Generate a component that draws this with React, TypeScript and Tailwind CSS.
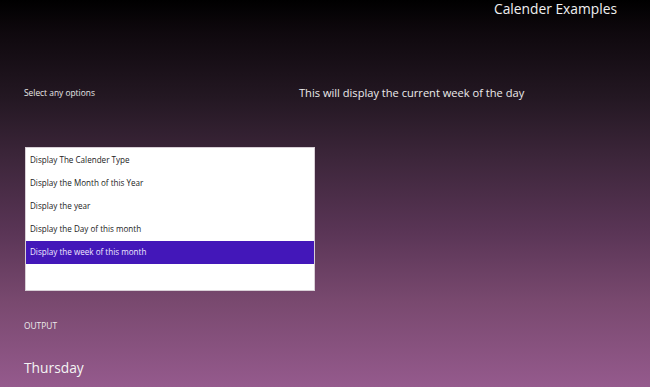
const options = [
  'Display The Calender Type',
  'Display the Month of this Year',
  'Display the year',
  'Display the Day of this month',
  'Display the week of this month',
];

export default function App() {
  const selected = 4;

  return (
    <div
      className="w-full h-[387px] overflow-hidden text-white bg-[linear-gradient(to_bottom,#000000_0%,#0e080d_8%,#231722_25%,#3b2539_40%,#5a3556_60%,#79496f_78%,#955a8d_100%)]"
      style={{ fontFamily: '"Open Sans", "Noto Sans", sans-serif' }}
    >
      <div className="flex justify-end pr-[33px] h-[18px]">
        <h1 className="text-[13.8px] leading-[18px] text-[#f0f0f0]">Calender Examples</h1>
      </div>

      <div className="flex mt-[67px] h-[16px] items-center">
        <div className="w-[299px] pl-[24px] text-[8.4px] text-[#e8e8e8]">Select any options</div>
        <div className="text-[11.1px] text-[#ececec]">This will display the current week of the day</div>
      </div>

      <div className="ml-[25px] mt-[46px] w-[290px] h-[144px] bg-white pt-[1px] border border-[#d8cfd6]">
        {options.map((opt, i) => (
          <div
            key={opt}
            className={
              i === selected
                ? 'h-[23px] px-[4px] flex items-center text-[8.1px] bg-[#4317b9] text-[#f0e8ff]'
                : 'h-[23px] px-[4px] flex items-center text-[8.1px] text-[#222222]'
            }
          >
            {opt}
          </div>
        ))}
      </div>

      <div className="pl-[24px] mt-[27px] text-[8.4px] leading-[16px] text-[#ececec]">OUTPUT</div>
      <div className="pl-[24px] mt-[24px] text-[13.8px] leading-[20px] text-[#f4f4f4]">Thursday</div>
    </div>
  );
}
